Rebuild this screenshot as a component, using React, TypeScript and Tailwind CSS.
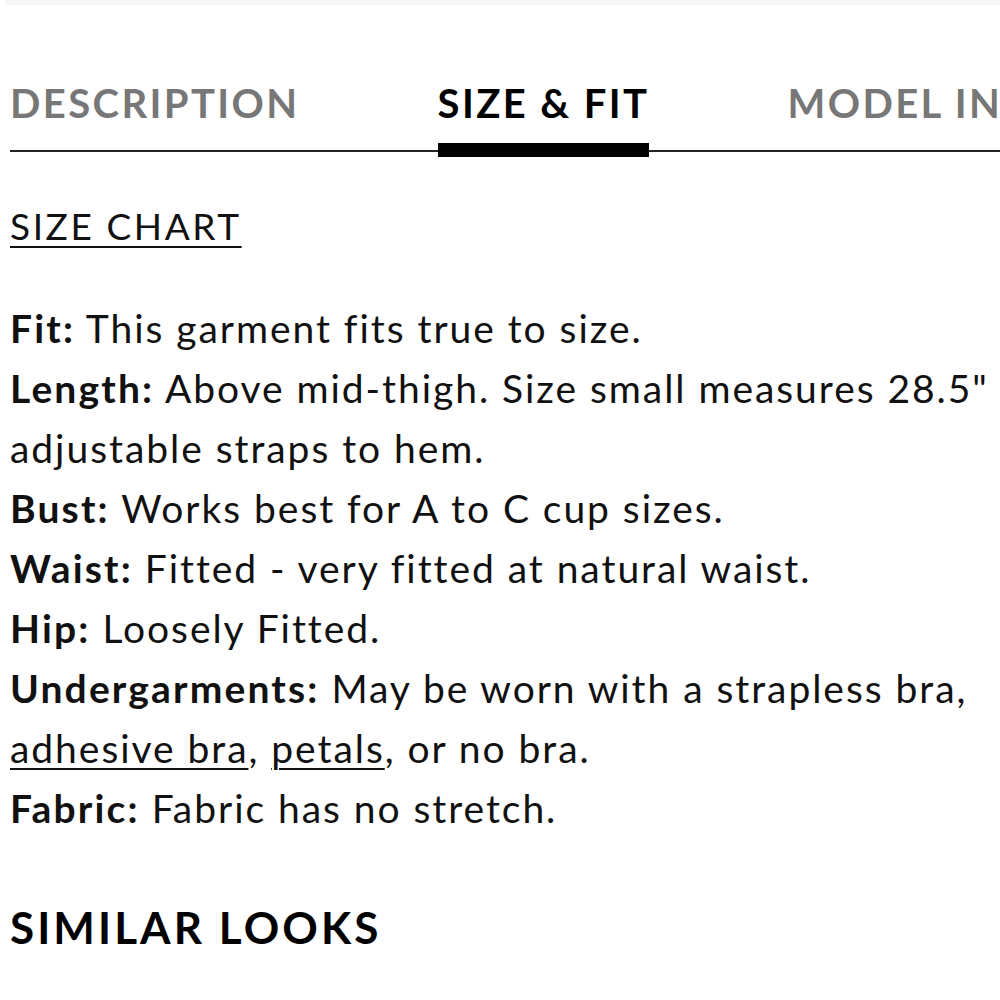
export default function App() {
  const rows: { label: string; body: React.ReactNode }[] = [
    { label: "Fit:", body: "This garment fits true to size." },
    { label: "Length:", body: 'Above mid-thigh. Size small measures 28.5" from adjustable straps to hem.' },
    { label: "Bust:", body: "Works best for A to C cup sizes." },
    { label: "Waist:", body: "Fitted - very fitted at natural waist." },
    { label: "Hip:", body: "Loosely Fitted." },
    {
      label: "Undergarments:",
      body: (
        <>
          May be worn with a strapless bra, <a className="underline underline-offset-[5px] decoration-2">adhesive bra</a>,{" "}
          <a className="underline underline-offset-[5px] decoration-2">petals</a>, or no bra.
        </>
      ),
    },
    { label: "Fabric:", body: "Fabric has no stretch." },
  ];

  return (
    <div className="w-[1000px] h-[1000px] overflow-hidden bg-white text-[#111]" style={{ fontFamily: "Lato, 'Open Sans', sans-serif" }}>
      <div className="ml-[5px] h-[5px] bg-[#f6f6f6]" />

      <div className="pl-[10px] w-[1200px]">
        {/* tabs */}
        <div className="relative pt-[74px]">
          <div className="flex gap-[138px] whitespace-nowrap text-[40px] font-bold tracking-[0.06em] leading-[48px]">
            <div className="text-[#777]">DESCRIPTION</div>
            <div className="relative text-black">
              SIZE &amp; FIT
              <div className="absolute left-0 right-0 top-[64px] h-[14px] bg-black z-10" />
            </div>
            <div className="text-[#777]">MODEL INFO</div>
          </div>
          <div className="mt-[23px] h-[2px] bg-[#222]" />
        </div>

        {/* content */}
        <div className="w-[1110px] pt-[54px]">
          <a className="text-[37px] tracking-[0.07em] underline underline-offset-[6px] decoration-2 leading-[40px]">SIZE CHART</a>

          <div className="mt-[52px] text-[39px] leading-[60px] tracking-[0.05em]">
            {rows.map((r) => (
              <p key={r.label}>
                <span className="font-bold tracking-[0.055em]">{r.label}</span> {r.body}
              </p>
            ))}
          </div>

          <h2 className="mt-[63px] text-[44px] font-bold tracking-[0.07em] leading-[52px] text-black">SIMILAR LOOKS</h2>
        </div>
      </div>
    </div>
  );
}
